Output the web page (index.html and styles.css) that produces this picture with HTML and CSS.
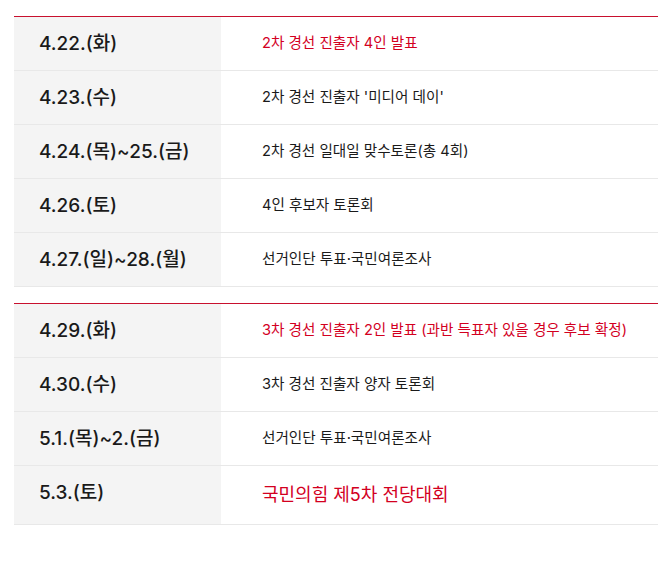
FILE: index.html
```html
<!DOCTYPE html>
<html lang="ko">
<head>
<meta charset="utf-8">
<link rel="stylesheet" href="styles.css">
</head>
<body>
<div class="schedule">
  <div class="block">
    <div class="row"><div class="date">4.22.(화)</div><div class="event red">2차 경선 진출자 4인 발표</div></div>
    <div class="row"><div class="date">4.23.(수)</div><div class="event">2차 경선 진출자 '미디어 데이'</div></div>
    <div class="row"><div class="date">4.24.(목)~25.(금)</div><div class="event">2차 경선 일대일 맞수토론(총 4회)</div></div>
    <div class="row"><div class="date">4.26.(토)</div><div class="event">4인 후보자 토론회</div></div>
    <div class="row"><div class="date">4.27.(일)~28.(월)</div><div class="event">선거인단 투표·국민여론조사</div></div>
  </div>
  <div class="block">
    <div class="row"><div class="date">4.29.(화)</div><div class="event red">3차 경선 진출자 2인 발표 (과반 득표자 있을 경우 후보 확정)</div></div>
    <div class="row"><div class="date">4.30.(수)</div><div class="event">3차 경선 진출자 양자 토론회</div></div>
    <div class="row"><div class="date">5.1.(목)~2.(금)</div><div class="event">선거인단 투표·국민여론조사</div></div>
    <div class="row"><div class="date">5.3.(토)</div><div class="event red big">국민의힘 제5차 전당대회</div></div>
  </div>
</div>
</body>
</html>
```
FILE: styles.css
```css
html, body {
  margin: 0;
  padding: 0;
  background: #fff;
}
body {
  font-family: Inter, "Noto Sans CJK KR", sans-serif;
  color: #222;
}
.schedule {
  padding: 16px 0 0 14px;
  display: flex;
  flex-direction: column;
  gap: 16px;
}
.block {
  border-top: 1px solid #c8102e;
}
.row {
  display: grid;
  grid-template-columns: 207px 1fr;
  border-bottom: 1px solid #e8e8e8;
}
.date {
  background: #f4f4f4;
  padding: 17px 0 0 25px;
  font-size: 19px;
  line-height: 20px;
  font-weight: 500;
  color: #1a1a1a;
}
.event {
  padding: 17px 0 17px 41px;
  font-size: 14.6px;
  line-height: 19px;
  color: #1a1a1a;
}
.event.red {
  color: #d3001f;
}
.event.big {
  font-size: 18px;
  line-height: 24px;
}
```
